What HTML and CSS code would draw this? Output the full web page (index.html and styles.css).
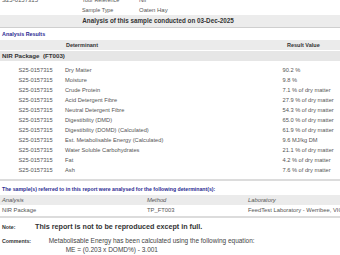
FILE: index.html
```html
<!DOCTYPE html>
<html>
<head>
<meta charset="utf-8">
<link rel="stylesheet" href="styles.css">
</head>
<body>
<div class="page">
  <div class="info">
    <div class="info-row"><span class="code">S25-0157315</span><span class="label">Your Reference</span><span class="value">Nil</span></div>
    <div class="info-row"><span class="code"></span><span class="label">Sample Type</span><span class="value">Oaten Hay</span></div>
  </div>

  <div class="banner">Analysis of this sample conducted on 03-Dec-2025</div>

  <div class="heading">Analysis Results</div>

  <div class="results">
    <div class="thead"><span class="th-det">Determinant</span><span class="th-res">Result Value</span></div>
    <div class="group">NIR Package&nbsp;&nbsp;(FT003)</div>
    <div class="rows">
      <div class="row"><span>S25-0157315</span><span>Dry Matter</span><span>90.2 %</span></div>
      <div class="row"><span>S25-0157315</span><span>Moisture</span><span>9.8 %</span></div>
      <div class="row"><span>S25-0157315</span><span>Crude Protein</span><span>7.1 % of dry matter</span></div>
      <div class="row"><span>S25-0157315</span><span>Acid Detergent Fibre</span><span>27.9 % of dry matter</span></div>
      <div class="row"><span>S25-0157315</span><span>Neutral Detergent Fibre</span><span>54.3 % of dry matter</span></div>
      <div class="row"><span>S25-0157315</span><span>Digestibility (DMD)</span><span>65.0 % of dry matter</span></div>
      <div class="row"><span>S25-0157315</span><span>Digestibility (DOMD) (Calculated)</span><span>61.9 % of dry matter</span></div>
      <div class="row"><span>S25-0157315</span><span>Est. Metabolisable Energy (Calculated)</span><span>9.6 MJ/kg DM</span></div>
      <div class="row"><span>S25-0157315</span><span>Water Soluble Carbohydrates</span><span>21.1 % of dry matter</span></div>
      <div class="row"><span>S25-0157315</span><span>Fat</span><span>4.2 % of dry matter</span></div>
      <div class="row"><span>S25-0157315</span><span>Ash</span><span>7.6 % of dry matter</span></div>
    </div>
  </div>

  <div class="caption">The sample(s) referred to in this report were analysed for the following determinant(s):</div>

  <div class="methods">
    <div class="m-head"><span>Analysis</span><span>Method</span><span>Laboratory</span></div>
    <div class="m-row"><span>NIR Package</span><span>TP_FT003</span><span>FeedTest Laboratory - Werribee, VIC</span></div>
  </div>

  <div class="note">
    <span class="note-label">Note:</span>
    <span class="note-text">This report is not to be reproduced except in full.</span>
  </div>

  <div class="comments">
    <span class="comments-label">Comments:</span>
    <div class="comments-text">
      <div>Metabolisable Energy has been calculated using the following equation:</div>
      <div class="equation">ME = (0.203 x DOMD%) - 3.001</div>
    </div>
  </div>
</div>
</body>
</html>
```

FILE: styles.css
```css
html, body {
  margin: 0;
  padding: 0;
  background: #ffffff;
}

body {
  font-family: "Liberation Sans", Arial, sans-serif;
  color: #444;
  overflow: hidden;
}

.page {
  width: 340px;
  white-space: nowrap;
}

/* top info */
.info {
  margin-top: -5px;
}

.info-row {
  display: grid;
  grid-template-columns: 80px 57px 1fr;
  padding-left: 2px;
  height: 10px;
  line-height: 10px;
  font-size: 6px;
  color: #555;
}

.info-row .label {
  font-size: 5.4px;
}

/* banner */
.banner {
  height: 12px;
  line-height: 12px;
  background: #ececec;
  border-bottom: 1px solid #cfcfcf;
  font-weight: bold;
  font-size: 6.3px;
  color: #333;
  text-align: center;
  padding-right: 24px;
}

.heading {
  height: 12px;
  line-height: 12px;
  padding-left: 2px;
  font-weight: bold;
  font-size: 5.4px;
  color: #2a2a92;
}

/* results table */
.thead {
  display: grid;
  grid-template-columns: 164px 1fr;
  height: 10px;
  line-height: 10px;
  background: #ebebeb;
  font-weight: bold;
  font-size: 5.5px;
  color: #333;
}

.th-det {
  text-align: center;
}

.th-res {
  padding-left: 123px;
}

.group {
  margin-top: 1px;
  height: 10px;
  line-height: 10px;
  padding-left: 2px;
  background: #e6e6e6;
  font-weight: bold;
  font-size: 6.2px;
  color: #333;
}

.rows {
  padding-top: 3.5px;
  padding-bottom: 4px;
  border-bottom: 2px solid #dcdcdc;
}

.row {
  display: grid;
  grid-template-columns: 46.5px 217.5px 1fr;
  padding-left: 18.5px;
  height: 10px;
  line-height: 10px;
  font-size: 5.7px;
  color: #555;
}

/* caption */
.caption {
  padding-top: 2px;
  height: 12px;
  line-height: 12px;
  padding-left: 2px;
  font-weight: bold;
  font-size: 5.2px;
  color: #2a2a92;
}

/* methods table */
.methods {
  padding-bottom: 1px;
  border-bottom: 2px solid #dcdcdc;
}

.m-head,
.m-row {
  display: grid;
  grid-template-columns: 145px 101px 1fr;
  padding-left: 2px;
  height: 10px;
  line-height: 10px;
  font-size: 5.8px;
  color: #555;
}

.m-head {
  background: #ebebeb;
  font-style: italic;
}

/* note */
.note {
  display: flex;
  align-items: baseline;
  margin-top: 4px;
  height: 10px;
  line-height: 10px;
  padding-left: 2px;
  color: #333;
}

.note-label {
  width: 33px;
  font-weight: bold;
  font-size: 5.3px;
}

.note-text {
  font-weight: bold;
  font-size: 7.2px;
}

/* comments */
.comments {
  display: flex;
  align-items: baseline;
  margin-top: 5.5px;
  padding-left: 2px;
  color: #444;
}

.comments-label {
  width: 46.7px;
  font-weight: bold;
  font-size: 5.3px;
  color: #333;
}

.comments-text {
  font-size: 6.5px;
  line-height: 8.5px;
}

.equation {
  padding-left: 17px;
}
```
